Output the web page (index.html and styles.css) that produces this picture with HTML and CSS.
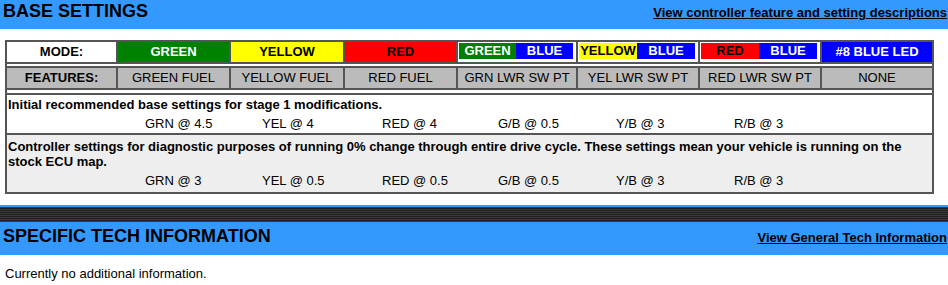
FILE: index.html
```html
<!DOCTYPE html>
<html lang="en">
<head>
<meta charset="utf-8">
<title>Base Settings</title>
<link rel="stylesheet" href="styles.css">
</head>
<body>
<section class="section">
  <header class="bar bar-first">
    <h1 class="bar-title">BASE SETTINGS</h1>
    <a class="bar-link" href="#">View controller feature and setting descriptions</a>
  </header>

  <div class="settings">
    <div class="grid mode-row">
      <div class="cell label plain">MODE:</div>
      <div class="cell green">GREEN</div>
      <div class="cell yellow">YELLOW</div>
      <div class="cell red">RED</div>
      <div class="cell dual"><span class="part green">GREEN</span><span class="part blue">BLUE</span></div>
      <div class="cell dual"><span class="part yellow">YELLOW</span><span class="part blue">BLUE</span></div>
      <div class="cell dual"><span class="part red">RED</span><span class="part blue">BLUE</span></div>
      <div class="cell blue">#8 BLUE LED</div>
    </div>
    <div class="grid feature-row">
      <div class="cell label">FEATURES:</div>
      <div class="cell">GREEN FUEL</div>
      <div class="cell">YELLOW FUEL</div>
      <div class="cell">RED FUEL</div>
      <div class="cell">GRN LWR SW PT</div>
      <div class="cell">YEL LWR SW PT</div>
      <div class="cell">RED LWR SW PT</div>
      <div class="cell">NONE</div>
    </div>
    <div class="note note-first">
      <p class="note-text">Initial recommended base settings for stage 1 modifications.</p>
      <div class="values">
        <span></span><span>GRN @ 4.5</span><span>YEL @ 4</span><span>RED @ 4</span><span>G/B @ 0.5</span><span>Y/B @ 3</span><span>R/B @ 3</span>
      </div>
    </div>
    <div class="note note-alt">
      <p class="note-text">Controller settings for diagnostic purposes of running 0% change through entire drive cycle. These settings mean your vehicle is running on the stock ECU map.</p>
      <div class="values">
        <span></span><span>GRN @ 3</span><span>YEL @ 0.5</span><span>RED @ 0.5</span><span>G/B @ 0.5</span><span>Y/B @ 3</span><span>R/B @ 3</span>
      </div>
    </div>
  </div>
</section>

<section class="section section-tech">
  <div class="stripe"></div>
  <header class="bar bar-second">
    <h2 class="bar-title">SPECIFIC TECH INFORMATION</h2>
    <a class="bar-link" href="#">View General Tech Information</a>
  </header>
  <p class="tech-text">Currently no additional information.</p>
</section>
</body>
</html>
```

FILE: styles.css
```css
html, body {
  margin: 0;
  padding: 0;
  background: #ffffff;
}

body {
  font-family: "Liberation Sans", Arial, sans-serif;
  font-size: 13px;
  color: #000000;
}

/* Section header bars */
.bar {
  display: flex;
  justify-content: space-between;
  align-items: baseline;
  background: #3399ff;
  padding: 0 1px 0 3px;
  box-sizing: border-box;
}

.bar-first {
  height: 29px;
  padding-top: 1px;
}

.bar-second {
  height: 33px;
  padding-top: 4px;
}

.bar-title {
  margin: 0;
  font-size: 18px;
  line-height: 20px;
  font-weight: bold;
}

.bar-link {
  font-size: 13px;
  line-height: 15px;
  font-weight: bold;
  color: #000000;
  text-decoration: underline;
}

/* Settings table */
.settings {
  margin: 11px 0 0 5px;
  width: 929px;
  box-sizing: border-box;
  border: 2px solid #555555;
  background: #ffffff;
}

.grid {
  display: grid;
  grid-template-columns: 109px 111px 112px 111px 118px 120px 120px 1fr;
  column-gap: 2px;
  background: #555555;
}

.mode-row {
  border-bottom: 2px solid #555555;
}

.feature-row {
  margin-top: 2px;
  border-top: 2px solid #555555;
  border-bottom: 2px solid #555555;
}

.cell {
  height: 20px;
  line-height: 20px;
  text-align: center;
  white-space: nowrap;
}

.mode-row .cell {
  font-weight: bold;
}

.feature-row .cell {
  background: #bbbbbb;
}

.label {
  font-weight: bold;
}

.plain {
  background: #ffffff;
}

.green {
  background: #008000;
  color: #ffffff;
}

.yellow {
  background: #ffff00;
  color: #000000;
}

.red {
  background: #ff0000;
  color: #000000;
}

.blue {
  background: #0000ff;
  color: #ffffff;
}

.dual {
  display: flex;
  background: #ffffff;
  padding: 1px 3px 3px 1px;
  box-sizing: border-box;
}

.part {
  flex: 1;
  height: 16px;
  line-height: 16px;
  font-weight: bold;
  text-align: center;
}

/* Notes with recommended values */
.note {
  padding: 2px 1px 2px 1px;
}

.note-first {
  margin-top: 3px;
  border-top: 2px solid #555555;
  border-bottom: 2px solid #555555;
}

.note-alt {
  background: #eeeeee;
  padding-top: 4px;
  padding-bottom: 4px;
}

.note-text {
  margin: 0;
  font-weight: bold;
  line-height: 15px;
}

.values {
  display: grid;
  grid-template-columns: 137px 117px 120px 116px 118px 118px 1fr;
  line-height: 15px;
  padding-top: 4px;
}

/* Lower section */
.section-tech {
  margin-top: 11px;
}

.stripe {
  height: 15px;
  border-top: 2px solid #3399ff;
  background: repeating-linear-gradient(to bottom, #3a3a3a 0, #3a3a3a 1px, #1f1f1f 1px, #1f1f1f 2px);
}

.tech-text {
  margin: 0;
  padding: 11px 0 0 5px;
  line-height: 15px;
}
```
